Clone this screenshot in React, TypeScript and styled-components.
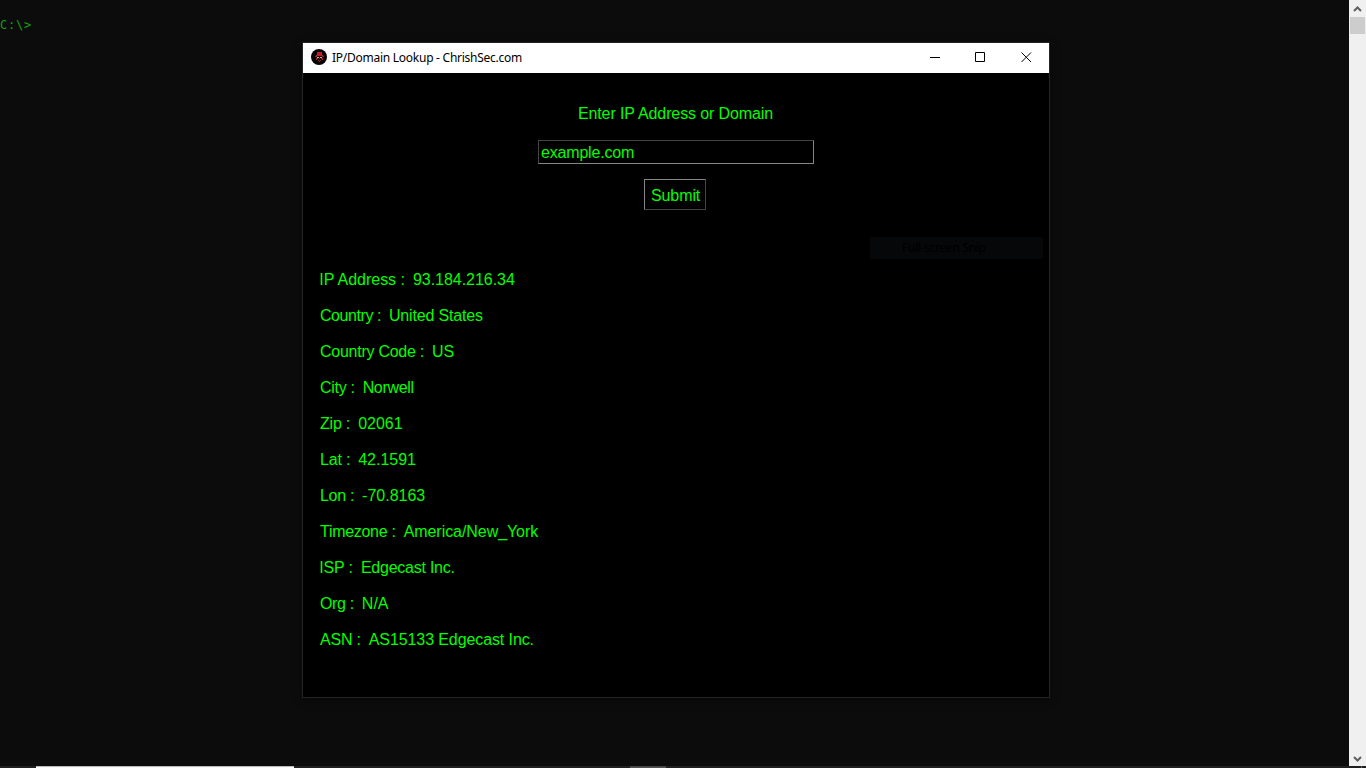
import React from "react";
import styled, { createGlobalStyle } from "styled-components";

const Global = createGlobalStyle`
  * { box-sizing: border-box; }
  body { margin: 0; background: #0c0c0c; overflow: hidden; }
`;

const Screen = styled.div`
  position: relative;
  display: flex;
  flex-direction: column;
  width: 1366px;
  height: 768px;
  overflow: hidden;
  background: #0c0c0c;
`;

const ConsoleArea = styled.div`
  display: flex;
  flex: 1;
  min-height: 0;
`;

const Prompt = styled.div`
  flex: 1;
  padding-top: 17px;
  color: #13a10e;
  font: 12px/16px "DejaVu Sans Mono", monospace;
  letter-spacing: 0.78px;
`;

const ScrollTrack = styled.div`
  display: flex;
  flex-direction: column;
  justify-content: space-between;
  width: 17px;
  background: #f0f0f0;
`;

const ScrollTop = styled.div`
  display: flex;
  flex-direction: column;
  align-items: center;
`;

const ScrollThumb = styled.div`
  width: 15px;
  height: 17px;
  background: #cdcdcd;
`;

const ScrollArrow = styled.svg`
  display: block;
  width: 17px;
  height: 17px;
`;

const Taskbar = styled.div`
  display: flex;
  height: 2px;
  background: #211f22;
`;

const TaskSegment = styled.div<{ $width: number; $color?: string; $edge?: string }>`
  width: ${(p) => p.$width}px;
  background: ${(p) => p.$color ?? "transparent"};
  border-top: 1px solid ${(p) => p.$edge ?? "transparent"};
`;

const Window = styled.section`
  position: absolute;
  left: 302px;
  top: 42px;
  width: 748px;
  height: 656px;
  display: flex;
  flex-direction: column;
  border: 1px solid #242424;
  background: #000;
  box-shadow: 0 2px 10px rgba(0, 0, 0, 0.35);
`;

const TitleBar = styled.header`
  display: flex;
  align-items: center;
  height: 30px;
  padding-left: 8px;
  background: #fff;
  color: #000;
`;

const AppIcon = styled.svg`
  width: 16px;
  height: 16px;
  margin: 0 5px 2px 0;
`;

const Title = styled.h1`
  flex: 1;
  margin: 0;
  font: 400 12px/16px "Noto Sans", sans-serif;
  letter-spacing: -0.26px;
`;

const Control = styled.span`
  display: flex;
  align-items: center;
  justify-content: center;
  width: 45px;
  height: 30px;
  padding-bottom: 1px;

  &:last-child {
    width: 46px;
    padding-left: 1px;
  }
`;

const ControlIcon = styled.svg`
  display: block;
  width: 11px;
  height: 11px;
`;

const Form = styled.div`
  display: flex;
  flex-direction: column;
  align-items: center;
  height: 164px;
  padding-top: 32px;
  color: #00ff00;
  font: 16px/18px "Liberation Sans", Arial, sans-serif;
`;

const Label = styled.label`
  margin-right: 1px;
  letter-spacing: -0.11px;
`;

const Field = styled.div`
  width: 276px;
  height: 24px;
  margin-top: 17px;
  padding: 3px 2px;
  border: 1px solid;
  border-color: #444 #858585 #858585 #444;
  line-height: 18px;
  letter-spacing: -0.18px;
`;

const Submit = styled.div`
  width: 62px;
  height: 31px;
  margin: 15px 2px 0 0;
  padding: 7px 0 0 6px;
  border: 1px solid;
  border-color: #858585 #444 #444 #858585;
  line-height: 18px;
  letter-spacing: -0.1px;
`;

const SnipLabel = styled.div`
  align-self: flex-end;
  width: 173px;
  height: 22px;
  margin-right: 6px;
  padding-left: 32px;
  background: #050709;
  color: #000;
  font: 12px/22px "Noto Sans", sans-serif;
  letter-spacing: -0.3px;
`;

const Results = styled.div`
  display: flex;
  flex-direction: column;
  padding: 3px 0 0 16px;
  color: #00ff00;
  font: 16px/36px "Liberation Sans", Arial, sans-serif;
`;

const Row = styled.div<{ $indent: number }>`
  display: flex;
  gap: 8px;
  height: 36px;
  padding-left: ${(p) => p.$indent}px;
  white-space: pre;
`;

const Part = styled.span<{ $spacing: number }>`
  letter-spacing: ${(p) => p.$spacing}px;
`;

interface Entry {
  name: string;
  value: string;
  indent: number;
  nameSpacing: number;
  valueSpacing: number;
}

const entries: Entry[] = [
  { name: "IP Address", value: "93.184.216.34", indent: 0.3, nameSpacing: -0.03, valueSpacing: -0.03 },
  { name: "Country", value: "United States", indent: 1, nameSpacing: -0.44, valueSpacing: -0.16 },
  { name: "Country Code", value: "US", indent: 1, nameSpacing: -0.26, valueSpacing: 0 },
  { name: "City", value: "Norwell", indent: 1, nameSpacing: -0.3, valueSpacing: -0.34 },
  { name: "Zip", value: "02061", indent: 1, nameSpacing: -0.2, valueSpacing: 0 },
  { name: "Lat", value: "42.1591", indent: 1, nameSpacing: -0.2, valueSpacing: 0 },
  { name: "Lon", value: "-70.8163", indent: 1, nameSpacing: -0.3, valueSpacing: 0 },
  { name: "Timezone", value: "America/New_York", indent: 1, nameSpacing: -0.29, valueSpacing: -0.06 },
  { name: "ISP", value: "Edgecast Inc.", indent: 0.3, nameSpacing: -0.16, valueSpacing: -0.24 },
  { name: "Org", value: "N/A", indent: 1, nameSpacing: -0.35, valueSpacing: 0 },
  { name: "ASN", value: "AS15133 Edgecast Inc.", indent: 1, nameSpacing: -0.2, valueSpacing: -0.1 },
];

export default function App() {
  return (
    <>
      <Global />
      <Screen>
        <ConsoleArea>
          <Prompt>C:\&gt;</Prompt>
          <ScrollTrack>
            <ScrollTop>
              <ScrollArrow viewBox="0 0 17 17">
                <path d="M5 11 8.5 7.5 12 11" fill="none" stroke="#606060" strokeWidth="2" />
              </ScrollArrow>
              <ScrollThumb />
            </ScrollTop>
            <ScrollArrow viewBox="0 0 17 17">
              <path d="M5 8 8.5 11.5 12 8" fill="none" stroke="#606060" strokeWidth="2" />
            </ScrollArrow>
          </ScrollTrack>
        </ConsoleArea>
        <Taskbar>
          <TaskSegment $width={36} />
          <TaskSegment $width={258} $color="#fafafa" $edge="#bcbcbc" />
          <TaskSegment $width={336} />
          <TaskSegment $width={36} $color="#515052" $edge="#474648" />
          <TaskSegment $width={695} />
          <TaskSegment $width={1} $color="#666" $edge="#555" />
        </Taskbar>
        <Window>
          <TitleBar>
            <AppIcon viewBox="0 0 16 16">
              <circle cx="8" cy="8" r="8" fill="#080404" />
              <path d="M6 3h5v3H6zM5 6h7v1H5z" fill="#bd2029" />
              <path d="M4 7h2v1H4zM11 7h2v1h-2zM5 9h2v1H5zM10 9h2v1h-2zM5 10h1v1H5zM11 10h1v1h-1zM7 11h1v1H7zM9 11h1v1H9zM8 12h1v1H8zM8 9h1v1H8z" fill="#a81c25" />
              <path d="M6 8h2v1H6zM9 8h2v1H9z" fill="#e6a0a2" />
            </AppIcon>
            <Title>IP/Domain Lookup - ChrishSec.com</Title>
            <Control>
              <ControlIcon viewBox="0 0 11 11"><path d="M0 5.5h10" stroke="#000" /></ControlIcon>
            </Control>
            <Control>
              <ControlIcon viewBox="0 0 11 11"><path d="M.5.5h9v9h-9z" fill="none" stroke="#000" /></ControlIcon>
            </Control>
            <Control>
              <ControlIcon viewBox="0 0 11 11"><path d="m.5.5 9.500 9.500m0-9.500-9.500 9.500" stroke="#000" /></ControlIcon>
            </Control>
          </TitleBar>
          <Form>
            <Label>Enter IP Address or Domain</Label>
            <Field>example.com</Field>
            <Submit>Submit</Submit>
          </Form>
          <SnipLabel>Full-screen Snip</SnipLabel>
          <Results>
            {entries.map((e) => (
              <Row key={e.name} $indent={e.indent}>
                <Part $spacing={e.nameSpacing}>{`${e.name} :`}</Part>
                <Part $spacing={e.valueSpacing}>{e.value}</Part>
              </Row>
            ))}
          </Results>
        </Window>
      </Screen>
    </>
  );
}
